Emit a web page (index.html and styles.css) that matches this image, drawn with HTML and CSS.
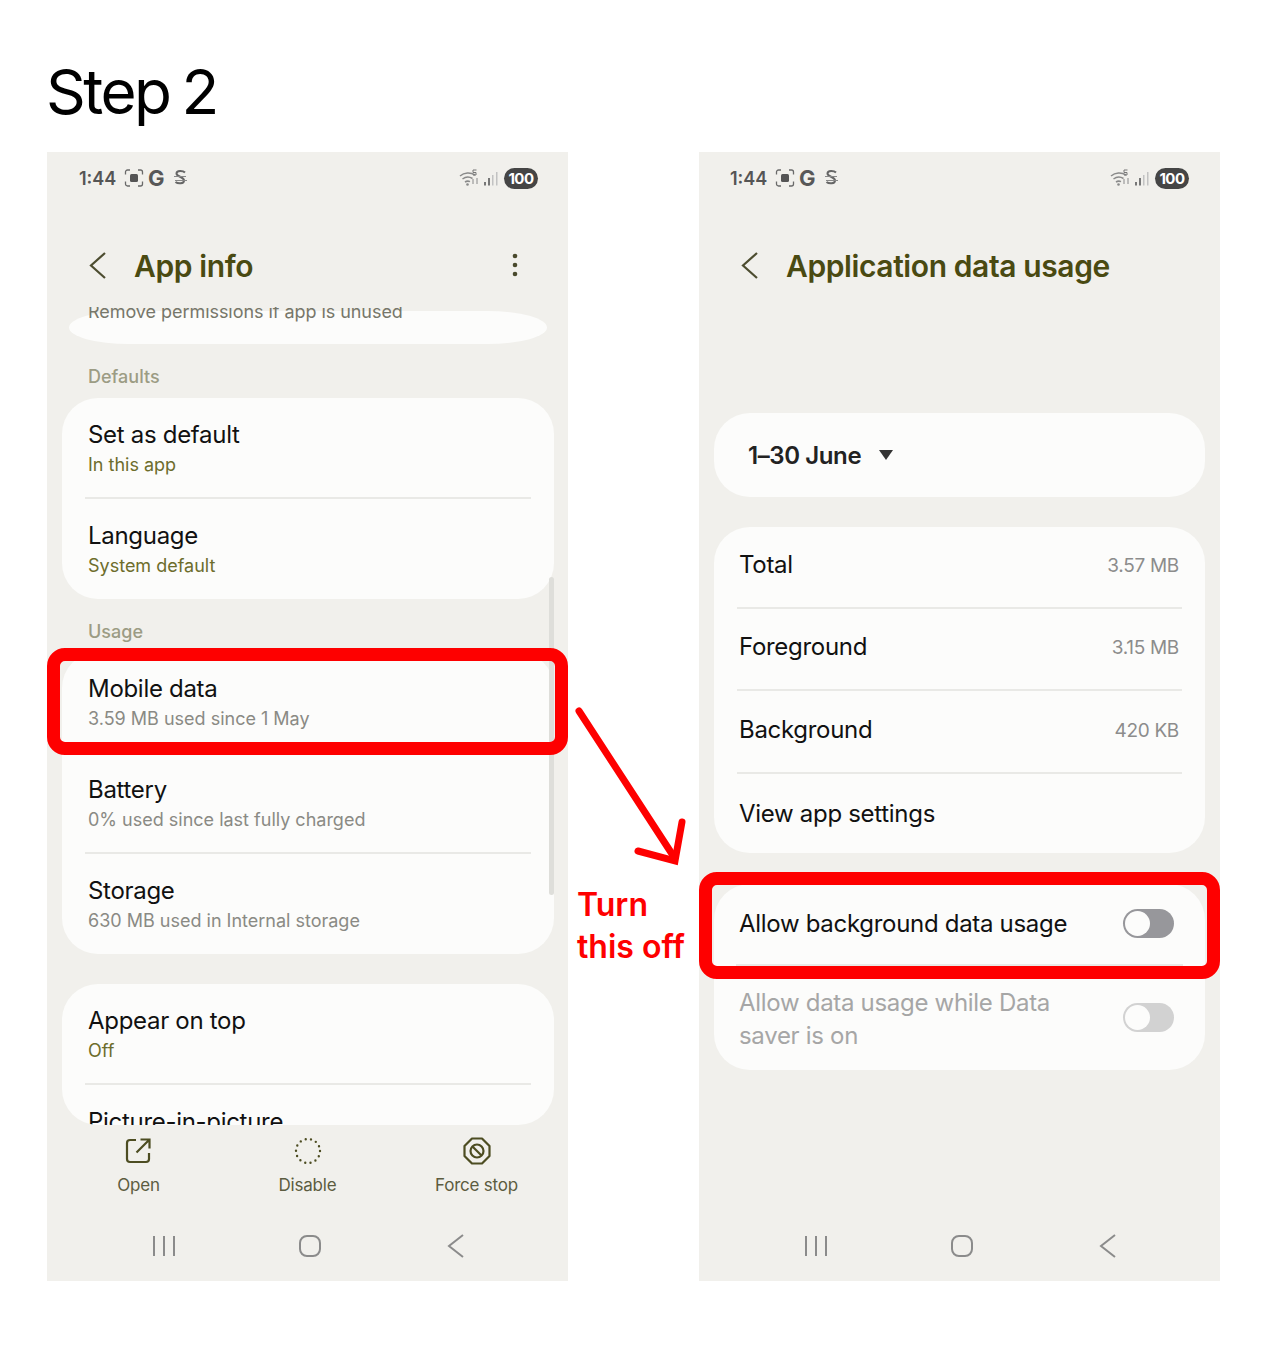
FILE: index.html
```html
<!DOCTYPE html>
<html lang="en">
<head>
    <meta charset="UTF-8">
    <meta name="viewport" content="width=device-width, initial-scale=1.0">
    <title>Step 2</title>
    <link rel="stylesheet" href="styles.css">
</head>
<body>
    <svg class="defs" width="0" height="0">
        <symbol id="status-shot" viewBox="0 0 20 20">
            <path d="M1.500 6.500V4a2 2 0 0 1 2-2h2.500M14 2h2.500a2 2 0 0 1 2 2v2.500M18.500 13.500V16a2 2 0 0 1-2 2H14M6 18H3.500a2 2 0 0 1-2-2v-2.500" fill="none" stroke="#6a6a6a" stroke-width="1.300"/>
            <rect x="6" y="6" width="8" height="8" rx="1.500" fill="#555"/>
        </symbol>
        <symbol id="status-s" viewBox="0 0 16 20">
            <path d="M13 4.500C11 2.500 4.500 2 4.500 5.500c0 3.500 7.500 3 7.500 7 0 3.500-6 3.500-8.500 1.500" fill="none" stroke="#666" stroke-width="2"/>
            <path d="M2 8.500h12M3 12.500h12" fill="none" stroke="#888" stroke-width="1"/>
        </symbol>
        <symbol id="status-net" viewBox="0 0 44 22">
            <path d="M3 9a13 13 0 0 1 15-1M5.500 12a9 9 0 0 1 10-.5M8 15a5 5 0 0 1 5-.3" fill="none" stroke="#8a8a8a" stroke-width="1.500"/>
            <circle cx="10.500" cy="17.500" r="1.300" fill="#8a8a8a"/>
            <path d="M16 3h3.500M16 3v2.500h3v2.500h-3" fill="none" stroke="#777" stroke-width="1"/>
            <path d="M16 12v5M20 11v6" fill="none" stroke="#9a9a9a" stroke-width="1.200"/>
            <rect x="27" y="15" width="2" height="3.500" fill="#777"/>
            <rect x="31" y="11" width="2" height="7.500" fill="#777"/>
            <rect x="35" y="8" width="1.500" height="10.500" fill="#c2c2c2"/>
            <rect x="39" y="5" width="1.500" height="13.500" fill="#c2c2c2"/>
        </symbol>
        <symbol id="nav-recent" viewBox="0 0 24 24">
            <path d="M2 2v20M12 2v20M22 2v20" fill="none" stroke="#8b8b8b" stroke-width="2"/>
        </symbol>
        <symbol id="nav-home" viewBox="0 0 24 24">
            <rect x="2" y="2" width="20" height="20" rx="7" fill="none" stroke="#8b8b8b" stroke-width="2"/>
        </symbol>
        <symbol id="nav-back" viewBox="0 0 24 24">
            <path d="M19 1 5 12l14 11" fill="none" stroke="#8b8b8b" stroke-width="2"/>
        </symbol>
        <symbol id="app-back" viewBox="0 0 18 28">
            <path d="M16 2 2 14.500 16 27" fill="none" stroke="#4d4d30" stroke-width="2.200"/>
        </symbol>
    </svg>

    <div class="page">
        <h1 class="step-title">Step 2</h1>

        <div class="phones">
            <div class="phone">
                <div class="status-bar">
                    <div class="status-side">
                        <span class="clock">1:44</span>
                        <svg width="20" height="20"><use href="#status-shot"/></svg>
                        <span class="status-g">G</span>
                        <svg width="16" height="20"><use href="#status-s"/></svg>
                    </div>
                    <div class="status-side">
                        <svg class="signal-icons" width="44" height="22"><use href="#status-net"/></svg>
                        <span class="battery">100</span>
                    </div>
                </div>

                <div class="app-bar">
                    <svg class="back" width="18" height="28"><use href="#app-back"/></svg>
                    <span class="app-title">App info</span>
                    <svg class="kebab" width="6" height="24" viewBox="0 0 6 24">
                        <circle cx="3" cy="3" r="2.300" fill="#4a4a2c"/>
                        <circle cx="3" cy="12" r="2.300" fill="#4a4a2c"/>
                        <circle cx="3" cy="21" r="2.300" fill="#4a4a2c"/>
                    </svg>
                </div>

                <div class="scroll-area">
                    <div class="lens-card">
                        <p class="lens-text">Remove permissions if app is unused</p>
                    </div>

                    <div class="section-label">Defaults</div>
                    <div class="card">
                        <div class="row">
                            <div class="row-title">Set as default</div>
                            <div class="row-sub olive">In this app</div>
                        </div>
                        <div class="divider"></div>
                        <div class="row">
                            <div class="row-title">Language</div>
                            <div class="row-sub olive">System default</div>
                        </div>
                    </div>

                    <div class="section-label label-usage">Usage</div>
                    <div class="card">
                        <div class="row">
                            <div class="row-title">Mobile data</div>
                            <div class="row-sub">3.59 MB used since 1 May</div>
                        </div>
                        <div class="divider"></div>
                        <div class="row">
                            <div class="row-title">Battery</div>
                            <div class="row-sub">0% used since last fully charged</div>
                        </div>
                        <div class="divider"></div>
                        <div class="row">
                            <div class="row-title">Storage</div>
                            <div class="row-sub">630 MB used in Internal storage</div>
                        </div>
                    </div>

                    <div class="card card-clipped">
                        <div class="row">
                            <div class="row-title">Appear on top</div>
                            <div class="row-sub olive">Off</div>
                        </div>
                        <div class="divider"></div>
                        <div class="row">
                            <div class="row-title">Picture-in-picture</div>
                        </div>
                    </div>

                    <div class="scrollbar"></div>
                </div>

                <div class="actions">
                    <div class="action">
                        <svg width="28" height="28" viewBox="0 0 28 28" fill="none" stroke="#4d4d22" stroke-width="2.200">
                            <path d="M11 3H5A3 3 0 0 0 2 6v16a3 3 0 0 0 3 3h16a3 3 0 0 0 3-3v-6"/>
                            <path d="M11.500 15.500 24 3M15.500 2.500h9v9"/>
                        </svg>
                        <span>Open</span>
                    </div>
                    <div class="action">
                        <svg width="28" height="28" viewBox="0 0 28 28" fill="none" stroke="#4d4d22" stroke-width="2.400" stroke-linecap="round">
                            <circle cx="14" cy="14" r="12" stroke-dasharray="0 5.385"/>
                        </svg>
                        <span>Disable</span>
                    </div>
                    <div class="action">
                        <svg width="28" height="28" viewBox="0 0 28 28" fill="none" stroke="#4d4d22" stroke-width="2.200">
                            <path d="M9 1.500h10L26.500 9v10L19 26.500H9L1.500 19V9z" stroke-linejoin="round"/>
                            <circle cx="14" cy="14" r="6.500"/>
                            <path d="m9.500 9.500 9 9"/>
                        </svg>
                        <span>Force stop</span>
                    </div>
                </div>

                <div class="nav-bar">
                    <svg width="24" height="24"><use href="#nav-recent"/></svg>
                    <svg width="24" height="24"><use href="#nav-home"/></svg>
                    <svg width="24" height="24"><use href="#nav-back"/></svg>
                </div>
            </div>

            <div class="phone">
                <div class="status-bar">
                    <div class="status-side">
                        <span class="clock">1:44</span>
                        <svg width="20" height="20"><use href="#status-shot"/></svg>
                        <span class="status-g">G</span>
                        <svg width="16" height="20"><use href="#status-s"/></svg>
                    </div>
                    <div class="status-side">
                        <svg class="signal-icons" width="44" height="22"><use href="#status-net"/></svg>
                        <span class="battery">100</span>
                    </div>
                </div>

                <div class="app-bar">
                    <svg class="back" width="18" height="28"><use href="#app-back"/></svg>
                    <span class="app-title">Application data usage</span>
                </div>

                <div class="usage-area">
                    <div class="card date-card">
                        <span class="date-text">1–30 June</span>
                        <span class="date-caret"></span>
                    </div>

                    <div class="card">
                        <div class="usage-row">
                            <span class="row-title">Total</span>
                            <span class="usage-value">3.57 MB</span>
                        </div>
                        <div class="divider"></div>
                        <div class="usage-row">
                            <span class="row-title">Foreground</span>
                            <span class="usage-value">3.15 MB</span>
                        </div>
                        <div class="divider"></div>
                        <div class="usage-row usage-row-tall">
                            <span class="row-title">Background</span>
                            <span class="usage-value">420 KB</span>
                        </div>
                        <div class="divider"></div>
                        <div class="usage-row usage-row-last">
                            <span class="row-title">View app settings</span>
                        </div>
                    </div>

                    <div class="card toggle-card">
                        <div class="usage-row">
                            <span class="row-title">Allow background data usage</span>
                            <span class="toggle"></span>
                        </div>
                        <div class="divider"></div>
                        <div class="toggle-row">
                            <span class="row-title disabled">Allow data usage while Data<br>saver is on</span>
                            <span class="toggle toggle-disabled"></span>
                        </div>
                    </div>
                </div>

                <div class="nav-bar">
                    <svg width="24" height="24"><use href="#nav-recent"/></svg>
                    <svg width="24" height="24"><use href="#nav-home"/></svg>
                    <svg width="24" height="24"><use href="#nav-back"/></svg>
                </div>
            </div>
        </div>

        <!-- red annotations on top of the screenshots -->
        <div class="mark mark-data"></div>
        <div class="mark mark-toggle"></div>
        <svg class="arrow" width="120" height="170" viewBox="0 0 120 170" fill="none" stroke="#fe0000" stroke-width="7" stroke-linecap="round">
            <path d="M4 4 99 150"/>
            <path d="M107 115 100 154 63 144"/>
        </svg>
        <div class="turn-off">Turn<br>this off</div>
    </div>
</body>
</html>
```

FILE: styles.css
```css
* {
    box-sizing: border-box;
}
body {
    margin: 0;
    background: #fff;
    font-family: Inter, "Liberation Sans", sans-serif;
}
.defs {
    display: none;
}
.page {
    position: relative;
    height: 1371px;
    padding: 0 47px;
}
.step-title {
    margin: 0 0 0 -1px;
    height: 152px;
    padding-top: 54px;
    font-size: 62px;
    line-height: 75px;
    font-weight: 400;
    letter-spacing: -2.5px;
    word-spacing: -3px;
    color: #000;
}
.phones {
    display: flex;
    gap: 131px;
}
.phone {
    width: 521px;
    height: 1129px;
    background: #f1f0ec;
    display: flex;
    flex-direction: column;
    overflow: hidden;
}

/* status bar */
.status-bar {
    height: 52px;
    padding: 15px 30px 0 32px;
    display: flex;
    justify-content: space-between;
    align-items: flex-start;
}
.phone + .phone .status-bar {
    padding: 15px 31px 0 31px;
}
.status-side {
    display: flex;
    align-items: center;
    height: 22px;
}
.clock {
    font-size: 18px;
    font-weight: 600;
    color: #555;
    margin-right: 8px;
}
.status-g {
    width: 18px;
    margin: 0 7px 0 3px;
    font-size: 22px;
    font-weight: 700;
    color: #585858;
    text-align: center;
}
.signal-icons {
    margin-right: 3px;
}
.battery {
    width: 34px;
    height: 21px;
    border-radius: 11px;
    background: #454545;
    color: #fff;
    font-size: 15px;
    font-weight: 700;
    line-height: 21px;
    text-align: center;
    letter-spacing: -0.5px;
}

/* app bar */
.app-bar {
    height: 103px;
    padding: 49px 50px 0 42px;
    display: flex;
    align-items: flex-start;
    position: relative;
}
.app-title {
    margin-left: 27px;
    margin-top: -5px;
    font-size: 30px;
    line-height: 36px;
    font-weight: 600;
    color: #4a4a12;
    letter-spacing: -0.4px;
}
.back {
    margin-top: -2px;
}
.kebab {
    margin-left: auto;
}

/* left phone list */
.scroll-area {
    position: relative;
    height: 818px;
    padding: 4px 14px 0 15px;
    overflow: hidden;
}
.lens-card {
    margin: 0 7px;
    height: 33px;
    border-radius: 60px / 50%;
    background: #fcfcfb;
}
.lens-text {
    margin: 0;
    position: relative;
    top: -11px;
    padding-left: 19px;
    font-size: 18px;
    line-height: 24px;
    letter-spacing: -0.05px;
    color: #77776a;
}
.section-label {
    margin: 21px 0 9px 26px;
    font-size: 18px;
    line-height: 24px;
    font-weight: 500;
    color: #9c9c84;
}
.label-usage {
    margin-bottom: 8px;
}
.card {
    background: #fcfcfb;
    border-radius: 36px;
}
.card-clipped {
    margin-top: 30px;
    height: 141px;
    overflow: hidden;
}
.row {
    height: 100px;
    padding: 23px 26px 0;
}
.row-title {
    font-size: 24px;
    line-height: 28px;
    letter-spacing: -0.3px;
    color: #111;
}
.row-sub {
    font-size: 18px;
    line-height: 32px;
    color: #8a8a84;
}
.olive {
    color: #6d6d2c;
}
.divider {
    height: 2px;
    margin: -1px 23px 0;
    background: #e9e9e6;
    position: relative;
}
.scrollbar {
    position: absolute;
    right: 14px;
    top: 270px;
    width: 5px;
    height: 318px;
    background: #dededa;
    border-radius: 3px;
}

/* bottom actions */
.actions {
    height: 104px;
    padding: 12px 7px 0;
    display: grid;
    grid-template-columns: repeat(3, 169px);
}
.action {
    display: flex;
    flex-direction: column;
    align-items: center;
    gap: 8px;
    font-size: 17px;
    line-height: 24px;
    letter-spacing: -0.2px;
    color: #5c5c40;
}
.nav-bar {
    height: 52px;
    padding: 5px 44px 0;
    display: grid;
    grid-template-columns: repeat(3, 146px);
    justify-items: center;
}

/* right phone */
.usage-area {
    height: 922px;
    padding: 106px 15px 0;
}
.date-card {
    height: 84px;
    padding-left: 34px;
    display: flex;
    align-items: center;
    margin-bottom: 30px;
}
.date-text {
    font-size: 24px;
    font-weight: 600;
    letter-spacing: -0.4px;
    color: #222;
}
.date-caret {
    width: 0;
    height: 0;
    margin-left: 18px;
    border-left: 7px solid transparent;
    border-right: 7px solid transparent;
    border-top: 10px solid #333;
}
.usage-row {
    height: 81px;
    padding: 0 26px 5px 25px;
    display: flex;
    align-items: center;
    justify-content: space-between;
}
.usage-row-tall {
    height: 82px;
    padding-bottom: 4px;
}
.usage-row-last {
    height: 79px;
    padding-bottom: 0;
}
.usage-value {
    font-size: 19px;
    letter-spacing: -0.3px;
    color: #8c8c8c;
}
.toggle-card {
    margin-top: 31px;
    height: 186px;
}
.toggle-card .usage-row {
    padding: 0 31px 2px 25px;
}
.toggle-card .divider {
    margin: -1px 22px 0;
}
.toggle-row {
    padding: 20px 31px 0 25px;
    display: flex;
    justify-content: space-between;
    align-items: center;
}
.disabled {
    color: #a6a6a6;
    line-height: 33px;
}
.toggle {
    position: relative;
    width: 51px;
    height: 29px;
    border-radius: 15px;
    background: #97979b;
}
.toggle::before {
    content: "";
    position: absolute;
    left: 2px;
    top: 2px;
    width: 25px;
    height: 25px;
    border-radius: 50%;
    background: #fcfcfb;
}
.toggle-disabled {
    margin-top: -4px;
    background: #d2d2d2;
}

/* annotations */
.mark {
    position: absolute;
    left: 47px;
    width: 521px;
    height: 107px;
    border: 13px solid #fe0000;
    border-radius: 18px;
}
.mark-data {
    top: 648px;
}
.mark-toggle {
    left: 699px;
    top: 872px;
}
.arrow {
    position: absolute;
    left: 575px;
    top: 707px;
}
.turn-off {
    position: absolute;
    left: 577px;
    top: 884px;
    font-size: 32px;
    line-height: 42px;
    font-weight: 600;
    color: #fe0000;
}
```
